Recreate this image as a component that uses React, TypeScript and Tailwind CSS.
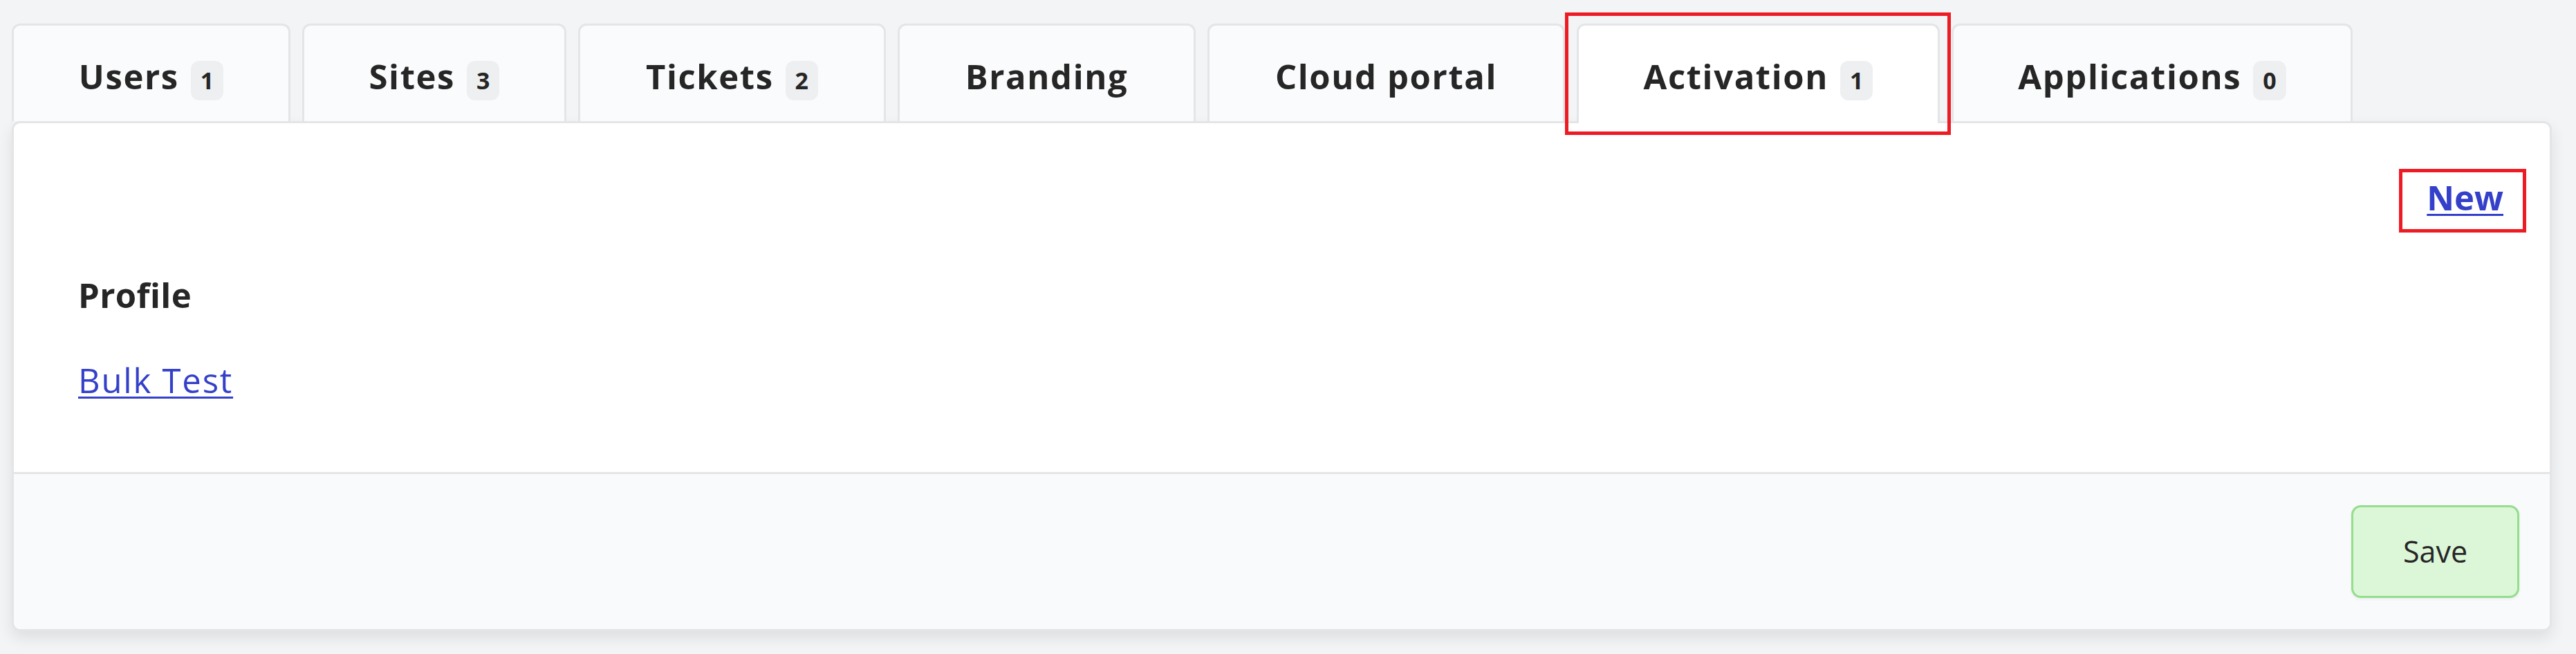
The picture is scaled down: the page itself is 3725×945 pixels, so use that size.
import React from 'react';

type Tab = { label: string; count?: number; width: string; active?: boolean };

const tabs: Tab[] = [
  { label: 'Users', count: 1, width: 'w-[403px]' },
  { label: 'Sites', count: 3, width: 'w-[382px]' },
  { label: 'Tickets', count: 2, width: 'w-[445px]' },
  { label: 'Branding', width: 'w-[431px]' },
  { label: 'Cloud portal', width: 'w-[517px]' },
  { label: 'Activation', count: 1, width: 'w-[525px]', active: true },
  { label: 'Applications', count: 0, width: 'w-[580px]' },
];

const TabItem = ({ tab }: { tab: Tab }) => (
  <div
    className={`relative flex shrink-0 items-baseline justify-center rounded-t-[12px] border-[3px] border-b-0 border-[#e4e5e7] pt-[40px] ${tab.width} ${
      tab.active ? 'z-10 -mb-[3px] h-[144px] bg-white' : 'h-[141px] bg-[#fafbfc]'
    }`}
  >
    <span className="text-[49px] leading-[67px] font-bold tracking-[1.6px] text-[#262626]">{tab.label}</span>
    {tab.count !== undefined && (
      <span className="ml-[17px] h-[57px] rounded-[12px] bg-[#eeeff1] px-[14px] text-[34px] leading-[57px] font-bold text-[#262626]">
        {tab.count}
      </span>
    )}
    {tab.active && (
      <span className="pointer-events-none absolute -top-[19px] -right-[19px] -bottom-[17px] -left-[20px] border-[5px] border-[#ed1c24]" />
    )}
  </div>
);

export default function App() {
  return (
    <div className="min-h-screen bg-[#f3f4f6] pt-[34px] pr-[35px] pl-[17px] font-['Open_Sans',sans-serif] text-[#262626]">
      {/* tab strip */}
      <div className="flex items-start gap-[17px]">
        {tabs.map((tab) => (
          <TabItem key={tab.label} tab={tab} />
        ))}
      </div>

      {/* activation panel */}
      <div className="overflow-hidden rounded-[12px] border-[3px] border-[#e4e5e7] bg-white shadow-[0_10px_22px_rgba(0,0,0,0.09)]">
        <div className="h-[504px] pt-[74px] pr-[67px] pl-[93px]">
          <div className="flex justify-end">
            <a href="#" className="relative text-[49px] leading-[67px] font-bold text-[#3440c9] underline decoration-[3px] underline-offset-[5px]">
              New
              <span className="pointer-events-none absolute -top-[8px] -right-[33px] -bottom-[17px] -left-[40px] border-[5px] border-[#ed1c24]" />
            </a>
          </div>
          <h3 className="mt-[74px] text-[49px] leading-[67px] font-bold tracking-[0.4px]">Profile</h3>
          <a href="#" className="mt-[56px] block w-fit text-[49px] leading-[67px] tracking-[1.8px] text-[#3440c9] underline decoration-[3px] underline-offset-[5px]">
            Bulk Test
          </a>
        </div>
        <div className="flex h-[227px] items-center justify-end border-t-[3px] border-[#e4e5e7] bg-[#f9fafb] pr-[44px]">
          <button className="h-[134px] w-[243px] rounded-[14px] border-[3px] border-[#94de8d] bg-[#dcf6d8] text-[43px] text-[#262626] shadow-[0_2px_4px_rgba(0,0,0,0.06)]">
            Save
          </button>
        </div>
      </div>
    </div>
  );
}
